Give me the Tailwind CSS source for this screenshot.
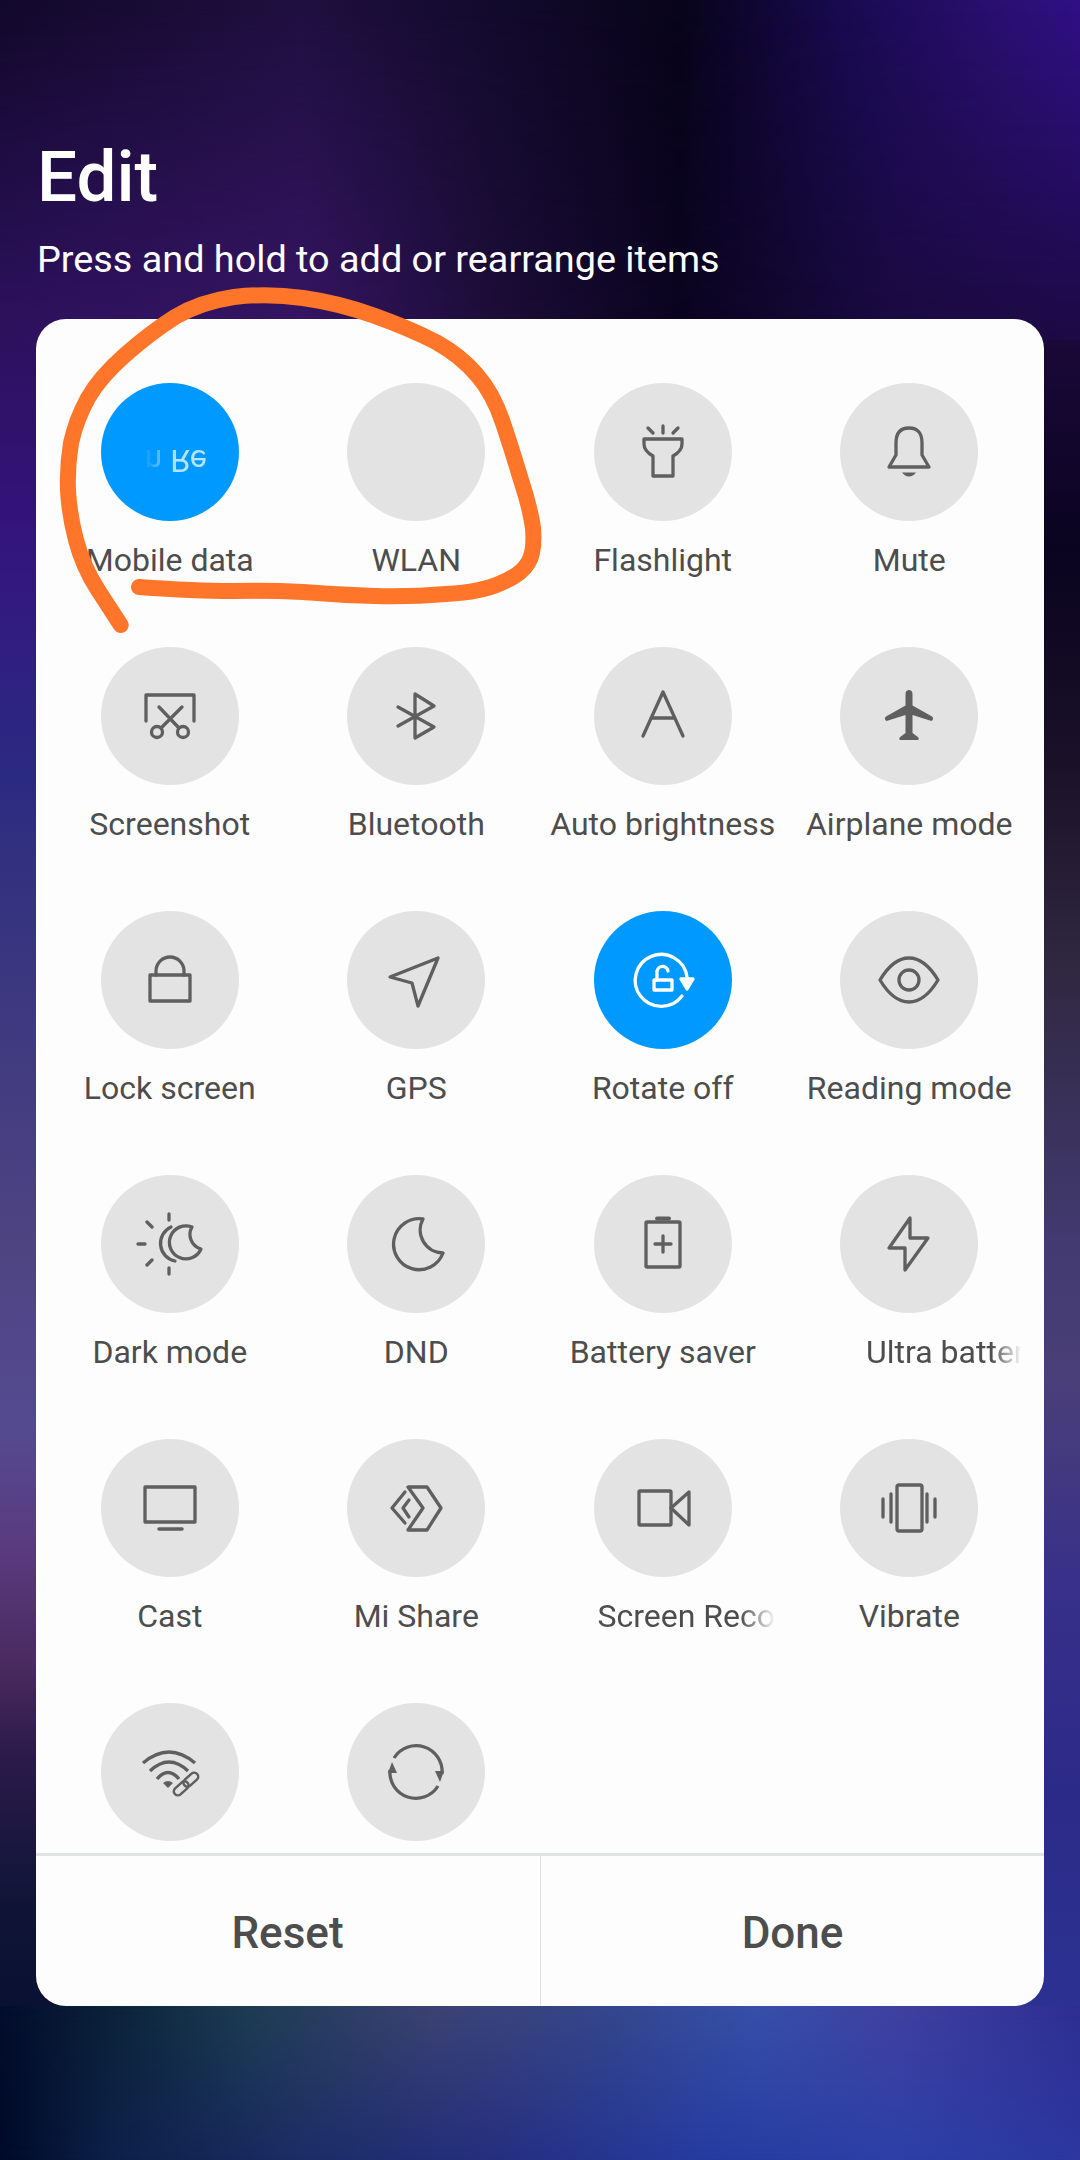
<!DOCTYPE html>
<html lang="en">
  <head>
    <meta charset="UTF-8" />
    <meta name="viewport" content="width=device-width, initial-scale=1.0" />
    <title>Edit</title>
    <script src="https://cdn.jsdelivr.net/npm/@tailwindcss/browser@4"></script>
  </head>
  <body class="bg-black font-[Roboto,sans-serif]">
    <div class="relative w-[1080px] h-[2160px] overflow-hidden">
      <!-- wallpaper -->
      <div class="absolute inset-0 flex">
        <div class="flex-1 bg-[linear-gradient(to_bottom,#2c1058_300px,#34147e_537px,#2b2a82_774px,#35337f_893px,#4f4482_1249px,#544a90_1427px,#5a3b80_1545px,#4b2a60_1664px,#2a1a4a_1759px,#101538_1900px,#000a28_2150px)]"></div>
        <div class="flex-1 bg-[linear-gradient(to_bottom,#30107f_0px,#300f60_138px,#1a0838_344px,#0a0420_551px,#1a1028_758px,#302840_965px,#423a70_1240px,#4a3f78_1378px,#38308a_1584px,#2c2a88_1791px,#2c3798_2150px)]"></div>
      </div>
      <div class="absolute top-0 inset-x-0 h-[340px] bg-[linear-gradient(to_right,#2e1260,#371565_28%,#1d0d38_46%,#0a0420_63%,#1a0a40_83%,#1d0a45)]">
        <div class="h-full bg-[linear-gradient(to_right,#12082a,#1f0f3f_28%,#120a2c_46%,#08041a_63%,#180a50_78%,#2b0f72_93%,#300f85)] [mask-image:linear-gradient(to_bottom,black,transparent)]"></div>
      </div>
      <div class="absolute bottom-0 inset-x-0 h-[154px] bg-[linear-gradient(to_right,#000a28,#0c2048_10%,#1c2d66_28%,#252f80_46%,#263ba0_65%,#2c40a8_83%,#2c37a0)]">
        <div class="h-full bg-[linear-gradient(to_right,#020c2c,#0a2238_10%,#1d3c52_23%,#3c4272_40%,#34468a_56%,#3650a8_70%,#40409f_83%,#2e2e90)] [mask-image:linear-gradient(to_bottom,black,transparent)]"></div>
      </div>

      <main class="relative flex flex-col h-full">
        <header class="h-[319px] pl-[37px] pt-[137px] text-white">
          <h1 class="text-[71px] leading-[80px] font-medium">Edit</h1>
          <p class="mt-[20px] text-[37.8px] leading-[44px]">Press and hold to add or rearrange items</p>
        </header>

        <section class="mx-9 h-[1687px] flex flex-col overflow-hidden rounded-[30px] bg-[#fdfdfd] text-[#4d4d4d]">
          <div class="flex-1 overflow-hidden pl-[10.5px] pr-[11.5px] pt-[64px]">
            <div class="grid grid-cols-4 auto-rows-[264px] text-[32px] leading-[40px] text-center">
              <!-- row 1 -->
              <div class="flex flex-col items-center">
                <div class="relative size-[138px] rounded-full bg-[#0099ff] overflow-hidden">
                  <span class="absolute left-[36px] top-[64px] text-[32px] leading-[28px] whitespace-nowrap text-[#b5e4ff] -scale-y-100 [mask-image:linear-gradient(to_right,transparent_10%,black_55%)]">in Re</span>
                </div>
                <p class="mt-[19px] whitespace-nowrap">Mobile data</p>
              </div>
              <div class="flex flex-col items-center">
                <div class="size-[138px] rounded-full bg-[#e3e3e3]"></div>
                <p class="mt-[19px] whitespace-nowrap">WLAN</p>
              </div>
              <div class="flex flex-col items-center">
                <div class="size-[138px] rounded-full bg-[#e3e3e3] flex items-center justify-center">
                  <svg class="size-20" viewBox="-40 -40 80 80" fill="none" stroke="#5f5f5f" stroke-width="3.3" stroke-linecap="round" stroke-linejoin="round">
                    <path d="M0 -26V-19M-15 -24L-10 -19M15 -24L10 -19" />
                    <path d="M-19 -13H19V-8Q19 -1 10 4V24H-10V4Q-19 -1 -19 -8Z" />
                  </svg>
                </div>
                <p class="mt-[19px] whitespace-nowrap">Flashlight</p>
              </div>
              <div class="flex flex-col items-center">
                <div class="size-[138px] rounded-full bg-[#e3e3e3] flex items-center justify-center">
                  <svg class="size-20" viewBox="-40 -40 80 80" fill="none" stroke="#5f5f5f" stroke-width="3.3" stroke-linecap="round" stroke-linejoin="round">
                    <path d="M-20 15H20L13 3V-9Q13 -24 0 -24Q-13 -24 -13 -9V3Z" />
                    <path d="M-7 20.5H7Q4 24.5 0 24.5Q-4 24.5 -7 20.5Z" fill="#5f5f5f" stroke="none" />
                  </svg>
                </div>
                <p class="mt-[19px] whitespace-nowrap">Mute</p>
              </div>

              <!-- row 2 -->
              <div class="flex flex-col items-center">
                <div class="size-[138px] rounded-full bg-[#e3e3e3] flex items-center justify-center">
                  <svg class="size-20" viewBox="-40 -40 80 80" fill="none" stroke="#5f5f5f" stroke-width="3.3" stroke-linecap="round" stroke-linejoin="round">
                    <path d="M-24 5V-21H24V5" />
                    <circle cx="-13" cy="16" r="5.5" />
                    <circle cx="13" cy="16" r="5.5" />
                    <path d="M-11 -9L9 12M12 -9L-9 12" />
                  </svg>
                </div>
                <p class="mt-[19px] whitespace-nowrap">Screenshot</p>
              </div>
              <div class="flex flex-col items-center">
                <div class="size-[138px] rounded-full bg-[#e3e3e3] flex items-center justify-center">
                  <svg class="size-20" viewBox="-40 -40 80 80" fill="none" stroke="#5f5f5f" stroke-width="3.3" stroke-linecap="round" stroke-linejoin="round">
                    <path d="M-18 -9L18 11L-1 22V-22L18 -10L-18 10" />
                  </svg>
                </div>
                <p class="mt-[19px] whitespace-nowrap">Bluetooth</p>
              </div>
              <div class="flex flex-col items-center">
                <div class="size-[138px] rounded-full bg-[#e3e3e3] flex items-center justify-center">
                  <svg class="size-20" viewBox="-40 -40 80 80" fill="none" stroke="#5f5f5f" stroke-width="3.3" stroke-linecap="round" stroke-linejoin="round">
                    <path d="M-20 20L0 -24L20 20M-12 2H12" />
                  </svg>
                </div>
                <p class="mt-[19px] whitespace-nowrap">Auto brightness</p>
              </div>
              <div class="flex flex-col items-center">
                <div class="size-[138px] rounded-full bg-[#e3e3e3] flex items-center justify-center">
                  <svg class="size-20" viewBox="-40 -40 80 80">
                    <path fill="#5f5f5f" d="M0 -26c2 0 3.5 1.5 3.5 4v11.5L23 0.5c1.5 1 1.5 3.5-.5 4.5L3.5 -1V17l6 4.5V24h-19v-2.5l6 -4.5V-1L-22.5 5c-2 -1 -2 -3.5 -.5 -4.5L-3.5 -10.5V-22c0 -2.5 1.5 -4 3.5 -4z" />
                  </svg>
                </div>
                <p class="mt-[19px] whitespace-nowrap">Airplane mode</p>
              </div>

              <!-- row 3 -->
              <div class="flex flex-col items-center">
                <div class="size-[138px] rounded-full bg-[#e3e3e3] flex items-center justify-center">
                  <svg class="size-20" viewBox="-40 -40 80 80" fill="none" stroke="#5f5f5f" stroke-width="3.3" stroke-linecap="round" stroke-linejoin="round">
                    <rect x="-20" y="-5" width="40" height="26" />
                    <path d="M-14 -5V-9A14 14 0 0 1 14 -9V-5" />
                  </svg>
                </div>
                <p class="mt-[19px] whitespace-nowrap">Lock screen</p>
              </div>
              <div class="flex flex-col items-center">
                <div class="size-[138px] rounded-full bg-[#e3e3e3] flex items-center justify-center">
                  <svg class="size-20" viewBox="-40 -40 80 80" fill="none" stroke="#5f5f5f" stroke-width="3.3" stroke-linecap="round" stroke-linejoin="round">
                    <path d="M-26 -3L22 -22L2 26L-4 3Z" />
                  </svg>
                </div>
                <p class="mt-[19px] whitespace-nowrap">GPS</p>
              </div>
              <div class="flex flex-col items-center">
                <div class="size-[138px] rounded-full bg-[#0099ff] flex items-center justify-center">
                  <svg class="size-20" viewBox="-40 -40 80 80" fill="none" stroke="#ffffff" stroke-width="3.3" stroke-linecap="round" stroke-linejoin="round">
                    <path d="M24 -3A26 26 0 1 0 19 16" />
                    <path d="M18 -1H30L24 9Z" fill="#ffffff" />
                    <rect x="-9" y="0" width="18" height="10" />
                    <path d="M-6 0V-7A5.5 5.5 0 0 1 5 -9" />
                  </svg>
                </div>
                <p class="mt-[19px] whitespace-nowrap">Rotate off</p>
              </div>
              <div class="flex flex-col items-center">
                <div class="size-[138px] rounded-full bg-[#e3e3e3] flex items-center justify-center">
                  <svg class="size-20" viewBox="-40 -40 80 80" fill="none" stroke="#5f5f5f" stroke-width="3.3" stroke-linecap="round" stroke-linejoin="round">
                    <path d="M-29 0C-20 -15 -11 -22 0 -22C11 -22 20 -15 29 0C20 15 11 22 0 22C-11 22 -20 15 -29 0Z" />
                    <circle cx="0" cy="0" r="10" />
                  </svg>
                </div>
                <p class="mt-[19px] whitespace-nowrap">Reading mode</p>
              </div>

              <!-- row 4 -->
              <div class="flex flex-col items-center">
                <div class="size-[138px] rounded-full bg-[#e3e3e3] flex items-center justify-center">
                  <svg class="size-20" viewBox="-40 -40 80 80" fill="none" stroke="#5f5f5f" stroke-width="3.3" stroke-linecap="round" stroke-linejoin="round">
                    <path d="M-1 -30V-24M-1 24V30M-32 0H-25M-23 -22L-18 -17M-23 21L-18 16" />
                    <path d="M1 -17A18 18 0 0 0 5 17" />
                    <path d="M22 -17A16.5 16.5 0 1 0 31 5A15 15 0 0 1 22 -17Z" />
                  </svg>
                </div>
                <p class="mt-[19px] whitespace-nowrap">Dark mode</p>
              </div>
              <div class="flex flex-col items-center">
                <div class="size-[138px] rounded-full bg-[#e3e3e3] flex items-center justify-center">
                  <svg class="size-20" viewBox="-40 -40 80 80" fill="none" stroke="#5f5f5f" stroke-width="3.3" stroke-linecap="round" stroke-linejoin="round">
                    <path d="M7 -25A25.5 25.5 0 1 0 27 9A23 23 0 0 1 7 -25Z" />
                  </svg>
                </div>
                <p class="mt-[19px] whitespace-nowrap">DND</p>
              </div>
              <div class="flex flex-col items-center">
                <div class="size-[138px] rounded-full bg-[#e3e3e3] flex items-center justify-center">
                  <svg class="size-20" viewBox="-40 -40 80 80" fill="none" stroke="#5f5f5f" stroke-width="3.3" stroke-linecap="round" stroke-linejoin="round">
                    <rect x="-17" y="-22" width="34" height="45" rx="1" />
                    <path d="M-6 -25.5H6" stroke-width="4" />
                    <path d="M-8 0H8M0 -8V8" />
                  </svg>
                </div>
                <p class="mt-[19px] whitespace-nowrap">Battery saver</p>
              </div>
              <div class="flex flex-col items-center">
                <div class="size-[138px] rounded-full bg-[#e3e3e3] flex items-center justify-center">
                  <svg class="size-20" viewBox="-40 -40 80 80" fill="none" stroke="#5f5f5f" stroke-width="3.3" stroke-linecap="round" stroke-linejoin="round">
                    <path d="M1 -26L-20 4H-4V26L19 -6H1Z" />
                  </svg>
                </div>
                <p class="mt-[19px] self-start ml-[80px] w-[156px] overflow-hidden whitespace-nowrap text-left [mask-image:linear-gradient(to_right,black_80%,transparent)]">Ultra battery saver</p>
              </div>

              <!-- row 5 -->
              <div class="flex flex-col items-center">
                <div class="size-[138px] rounded-full bg-[#e3e3e3] flex items-center justify-center">
                  <svg class="size-20" viewBox="-40 -40 80 80" fill="none" stroke="#5f5f5f" stroke-width="3.3" stroke-linecap="round" stroke-linejoin="round">
                    <rect x="-25" y="-21" width="50" height="35" />
                    <path d="M-11 21H12" stroke-width="3.5" />
                  </svg>
                </div>
                <p class="mt-[19px] whitespace-nowrap">Cast</p>
              </div>
              <div class="flex flex-col items-center">
                <div class="size-[138px] rounded-full bg-[#e3e3e3] flex items-center justify-center">
                  <svg class="size-20" viewBox="-40 -40 80 80" fill="none" stroke="#5f5f5f" stroke-width="3.3" stroke-linecap="round" stroke-linejoin="round">
                    <path d="M-8 -21H11L25 0L11 22H-8L7 0Z" />
                    <path d="M-11 -16L-24 0L-11 15M-7 -8L-13 0L-7 9" />
                  </svg>
                </div>
                <p class="mt-[19px] whitespace-nowrap">Mi Share</p>
              </div>
              <div class="flex flex-col items-center">
                <div class="size-[138px] rounded-full bg-[#e3e3e3] flex items-center justify-center">
                  <svg class="size-20" viewBox="-40 -40 80 80" fill="none" stroke="#5f5f5f" stroke-width="3.3" stroke-linecap="round" stroke-linejoin="round">
                    <rect x="-24" y="-17" width="32" height="34" rx="1" />
                    <path d="M8 0L26 -16V17Z" />
                  </svg>
                </div>
                <p class="mt-[19px] self-start ml-[58px] w-[178px] overflow-hidden whitespace-nowrap text-left [mask-image:linear-gradient(to_right,black_80%,transparent)]">Screen Recorder</p>
              </div>
              <div class="flex flex-col items-center">
                <div class="size-[138px] rounded-full bg-[#e3e3e3] flex items-center justify-center">
                  <svg class="size-20" viewBox="-40 -40 80 80" fill="none" stroke="#5f5f5f" stroke-width="3.3" stroke-linecap="round" stroke-linejoin="round">
                    <rect x="-12" y="-23" width="25" height="46" rx="2" />
                    <path d="M-18 -14V14M18 -14V14M-26 -9V9M26 -9V9" />
                  </svg>
                </div>
                <p class="mt-[19px] whitespace-nowrap">Vibrate</p>
              </div>

              <!-- row 6, labels are cut off by the buttons -->
              <div class="flex flex-col items-center">
                <div class="size-[138px] rounded-full bg-[#e3e3e3] flex items-center justify-center">
                  <svg class="size-20" viewBox="-40 -40 80 80" fill="none" stroke="#5f5f5f" stroke-width="3.3">
                    <path d="M-27 -9Q-1 -31 25 -9M-20 -1Q-1 -19 18 -1M-13 7Q-2 -6 9 7" />
                    <path d="M-7 11Q-2 7 3 11L-2 16Z" fill="#5f5f5f" stroke="none" />
                    <g transform="translate(16 12) rotate(-42)" stroke-width="2.5">
                      <rect x="-15" y="-4" width="17" height="8" rx="4" />
                      <rect x="-2" y="-4" width="17" height="8" rx="4" />
                    </g>
                  </svg>
                </div>
              </div>
              <div class="flex flex-col items-center">
                <div class="size-[138px] rounded-full bg-[#e3e3e3] flex items-center justify-center">
                  <svg class="size-20" viewBox="-40 -40 80 80" fill="none" stroke="#5f5f5f" stroke-width="3.3">
                    <path d="M-22 -14A26 26 0 0 1 26 2M22 14A26 26 0 0 1 -26 -2" />
                    <path d="M-28 1L-24 -10L-19 1ZM28 -1L24 10L19 -1Z" fill="#5f5f5f" stroke="none" />
                  </svg>
                </div>
              </div>
            </div>
          </div>

          <footer class="h-[153px] flex border-t-[3px] border-[#e2e3e3] text-[44px] font-medium">
            <button class="flex-1 border-r border-[#e2e3e3] pr-[1px] pt-[3px]">Reset</button>
            <button class="flex-1 pt-[3px]">Done</button>
          </footer>
        </section>
      </main>

      <!-- hand drawn marker on top of the screenshot -->
      <svg class="absolute inset-0 w-full h-full" viewBox="0 0 1080 2160" fill="none" stroke="#ff7529" stroke-width="16" stroke-linecap="round" stroke-linejoin="round">
        <path d="M120.7 625L98 590Q83 567 76 540Q69 513 68 490Q67 467 71 443Q76 420 88 398Q100 377 125 355Q150 333 175 317Q200 302 234 297Q268 293 303 298Q339 303 375 316Q411 329 436 342Q461 356 477 375Q493 393 503 423Q513 453 521 480Q530 507 533 528Q535 552 528 563Q521 575 501 583Q482 592 446 594Q411 597 375 596Q339 595 303 592Q268 590 232 591Q196 591 139 587" />
      </svg>
    </div>
  </body>
</html>
